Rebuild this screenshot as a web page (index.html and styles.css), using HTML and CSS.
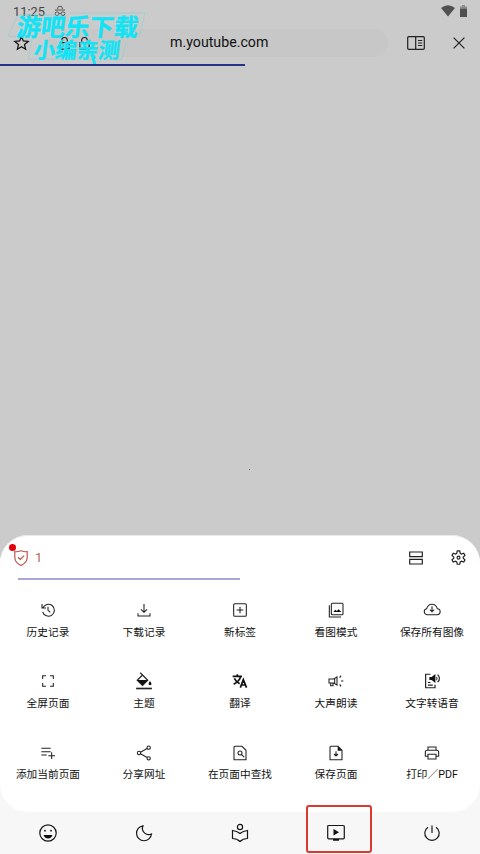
FILE: index.html
```html
<!DOCTYPE html>
<html lang="zh-CN">
<head>
<meta charset="utf-8">
<title>m.youtube.com</title>
<link rel="stylesheet" href="styles.css">
</head>
<body>
<div class="phone">
  <header class="status">
    <span class="time">11:25</span>
    <svg class="private" viewBox="0 0 12 12"><path d="M3.500 4 4.300 1.400h3.400L8.500 4M1 5h10M5 8.500h2"/><circle cx="3" cy="8.700" r="1.900"/><circle cx="9" cy="8.700" r="1.900"/></svg>
    <svg class="wifi" viewBox="0 0 14 12"><path d="M0 3Q7-2.500 14 3L7 11.500Z"/></svg>
    <svg class="battery" viewBox="0 0 7 12"><path class="cap" d="M2 0h3v1.500h2V3.500H0v-2h2Z"/><path d="M0 3.500h7V12H0Z"/></svg>
  </header>
  <div class="toolbar">
    <svg class="star" viewBox="0 0 24 24"><path d="m12 1.500 2.900 7.200 7.900.7-6 5.100 1.800 7.500-6.600-4-6.600 4 1.800-7.500-6-5.100 7.900-.7Z"/></svg>
    <div class="address">
      <svg class="lock" viewBox="0 0 14 14"><path d="M4 5V3.500a3 3 0 0 1 6 0V5M2 6h10v7H2Z"/></svg>
      <svg class="lock" viewBox="0 0 14 14"><path d="M4 5V3.500a3 3 0 0 1 6 0V5M2 6h10v7H2Z"/></svg>
      <span class="url">m.youtube.com</span>
    </div>
    <svg class="reader" viewBox="0 0 18 14"><rect x=".7" y=".7" width="16.600" height="12.600" rx="1"/><path d="M8.700 1v12M11 4.500h4.200M11 7h4.200M11 9.500h4.200"/></svg>
    <svg class="close" viewBox="0 0 12 12"><path d="m.6.600 10.800 10.800M11.400.6.600 11.400"/></svg>
  </div>
  <div class="progress"></div>
  <main class="page"><span class="speck"></span></main>
  <div class="lower">
    <section class="sheet">
      <div class="sheet-head">
        <svg class="shield" viewBox="0 0 16 18"><path d="M8 1.800Q11.500 3 14.200 2.700V8.500C14.200 12 11.500 14.800 8 16.500 4.500 14.800 1.800 12 1.800 8.500V2.700Q4.500 3 8 1.800ZM5 8.300l2.300 2.200 3.900-3.900"/></svg>
        <span class="count">1</span>
        <svg class="tabs" viewBox="0 0 14 14"><path d="M.7 1h12.600v4.700H.7ZM.7 8.300h12.600V13H.7Z"/></svg>
        <svg class="gear" viewBox="0 0 24 24"><path d="M10 1.500h4l.8 3.700 2 1.200 3.600-1.200 2 3.500-2.800 2.500v2l2.800 2.500-2 3.500-3.600-1.200-2 1.200-.8 3.600h-4l-.8-3.600-2-1.200-3.600 1.200-2-3.500 2.800-2.500v-2L1.600 8.700l2-3.500 3.600 1.200 2-1.200Z"/><circle cx="12" cy="12.200" r="2.300"/></svg>
        <span class="alert"></span>
      </div>
      <div class="rule"></div>
      <div class="actions">
        <div class="action"><svg viewBox="0 0 24 24"><path d="M4.200 9A9 9 0 1 1 4 15M3 3v6h6M12 7v5.500l3.500 3"/></svg><span>历史记录</span></div>
        <div class="action"><svg viewBox="0 0 24 24"><path d="M12 3v12M7.500 11l4.500 4.500 4.500-4.500M3 17v4h18v-4"/></svg><span>下载记录</span></div>
        <div class="action"><svg viewBox="0 0 24 24"><rect x="2.500" y="2.500" width="19" height="19" rx="1.500"/><path d="M12 7v10M7 12h10"/></svg><span>新标签</span></div>
        <div class="action"><svg viewBox="0 0 24 24"><rect x="5" y="2" width="17.500" height="17" rx="1.500"/><path d="M2 5v17.500h17.500"/><path class="solid" d="m8 15 3-3.500 2.200 2L16 11l4 4Z"/></svg><span>看图模式</span></div>
        <div class="action"><svg viewBox="0 0 24 24"><path d="M6 19H4.500a4.500 4.500 0 0 1-.5-8.900Q6 3.500 12 3.500T20 10a4.500 4.500 0 0 1-.5 9H18M12 6.500v8M8.800 11.500 12 14.700l3.200-3.200M6 19h12"/></svg><span>保存所有图像</span></div>

        <div class="action"><svg viewBox="0 0 24 24"><path d="M4 9V4h5M15 4h5v5M20 15v5h-5M9 20H4v-5"/></svg><span>全屏页面</span></div>
        <div class="action"><svg class="large" viewBox="0 0 24 24"><path d="m7 1 10 10-7 7-7-7 7-7"/><path class="solid" d="M3 10.500h14L10 17.500ZM20 12q4 5 0 5.500-4-.5 0-5.500Z"/><path class="heavy" d="M1.500 22h21"/></svg><span>主题</span></div>
        <div class="action"><svg viewBox="0 0 24 24"><path class="bold" d="M1 5h14M8 2v3M3.500 8c2 4 5 6.500 8 8M13 5c-1 5-5 9-10.500 12M12.500 22l4.500-12 4.800 12M14 18h6"/></svg><span>翻译</span></div>
        <div class="action"><svg viewBox="0 0 24 24"><path d="M1.500 9h7l5-3v12l-5-3h-7ZM4 15v4h3.500v-4M10 9v6M19.500 12H23M17.500 7l2-3M17.500 17l2 3"/></svg><span>大声朗读</span></div>
        <div class="action"><svg class="large" viewBox="0 0 24 24"><path d="M10 3H3.500v18H16v-4M6.500 14H10M6.500 17.500H13M19.500 3.500q5 5 0 10"/><path class="solid" d="M8.500 6.500h3L16.500 2.500v12l-5-4h-3ZM17.800 5.500q3 3 0 6Z"/></svg><span>文字转语音</span></div>

        <div class="action"><svg viewBox="0 0 24 24"><path d="M2 5h14M2 10h14M2 15h8M17.500 11v10M12.500 16h10"/></svg><span>添加当前页面</span></div>
        <div class="action"><svg viewBox="0 0 24 24"><circle cx="4.500" cy="12" r="2.500"/><circle cx="19" cy="4" r="2.500"/><circle cx="19" cy="20" r="2.500"/><path d="m6.700 10.800 10-5.600M6.700 13.200l10 5.600"/></svg><span>分享网址</span></div>
        <div class="action"><svg viewBox="0 0 24 24"><path d="M4.500 2H15l6 6v14H3V3.500Q3 2 4.500 2Z"/><circle cx="12" cy="12" r="3"/><path d="m14.300 14.300 4 4"/></svg><span>在页面中查找</span></div>
        <div class="action"><svg viewBox="0 0 24 24"><path d="M4.500 2H15l6 6v14H3V3.500Q3 2 4.500 2ZM12 9.500v7M9 13.500l3 3 3-3"/><path class="solid" d="M14.500 2 21 8.500h-6.500Z"/></svg><span>保存页面</span></div>
        <div class="action"><svg viewBox="0 0 24 24"><path d="M6 8V3h12v5M6 17H2v-6a3 3 0 0 1 3-3h14a3 3 0 0 1 3 3v6h-4M6 14h12v7H6Z"/></svg><span>打印／PDF</span></div>
      </div>
    </section>
    <nav class="nav">
      <div class="item"><svg viewBox="0 0 20 20"><circle cx="10" cy="10" r="8.200"/><path class="solid" d="M5.500 12h9q-1.300 3.500-4.500 3.500T5.500 12Z"/><circle class="solid" cx="7" cy="7.700" r=".9"/><circle class="solid" cx="13" cy="7.700" r=".9"/></svg></div>
      <div class="item"><svg viewBox="0 0 20 20"><path d="M9 2.800A7.500 7.500 0 1 0 17.500 11 6.300 6.300 0 0 1 9 2.800Z"/></svg></div>
      <div class="item"><svg viewBox="0 0 20 20"><circle cx="10" cy="4" r="2.600"/><path d="M2.500 7.500Q7 8 10 10.500 13 8 17.500 7.500v8Q13 15.500 10 18.500 7 15.500 2.500 15.500Z"/></svg></div>
      <div class="item"><svg viewBox="0 0 20 20"><rect x="1.700" y="2.500" width="16.600" height="13.300" rx="1"/><path class="solid" d="m7.500 6 5.500 3.300-5.500 3.300ZM7 16h6v1.800H7Z"/></svg><span class="highlight"></span></div>
      <div class="item"><svg viewBox="0 0 20 20"><path d="M10 2.500V10M6 4.200a7.200 7.200 0 1 0 8 0"/></svg></div>
    </nav>
  </div>
  <div class="stamp">
    <svg class="stamp-lines" viewBox="0 0 146 56"><path d="M10 3H54l3-2M62 1h75l-5 22-5 3M10 3 0 24l19 1M24 27 20 47h65M118 31l-4 16h-12"/></svg>
    <span class="stamp-top">游吧乐下载</span>
    <span class="stamp-bottom">小编亲测</span>
    <span class="stamp-tail"></span>
  </div>
</div>
</body>
</html>
```
FILE: styles.css
```css
* { box-sizing: border-box; }
body { margin: 0; font-family: Roboto, "Noto Sans CJK SC", sans-serif; color: #111; }
svg { display: block; flex: none; fill: none; stroke: #222; stroke-width: 1.2; overflow: visible; }
.phone { position: relative; display: flex; flex-direction: column; width: 480px; height: 854px; overflow: hidden; background: #cbcbcb; }

.status { display: flex; align-items: center; height: 22px; padding: 0 13px; }
.time { width: 32px; font-size: 12.8px; color: #444; white-space: nowrap; }
.private { width: 12px; height: 12px; margin-left: 9px; stroke: #555; stroke-width: 1; }
.wifi { width: 14px; height: 12px; margin-left: auto; }
.battery { width: 7px; height: 12px; margin-left: 5px; }
.wifi, .battery { fill: #505050; stroke: none; }
.cap { fill: #8c8c8c; }

.toolbar { display: flex; align-items: center; height: 42px; padding: 0 15px 0 14px; }
.star { width: 15px; height: 16px; stroke: #111; stroke-width: 2; }
.address { display: flex; align-items: center; gap: 7px; width: 340px; height: 28px; margin-left: 19px; padding-left: 10px; border-radius: 14px; background: #c7c7c7; }
.lock { width: 13px; height: 13px; }
.url { margin: 0 0 2px 72px; font-size: 14.2px; line-height: 20px; }
.reader { width: 18px; height: 14px; margin-left: 19px; }
.close { width: 12px; height: 12px; margin-left: auto; }
.progress { width: 245px; height: 2px; background: #283286; }
.page { flex: 1; display: flex; align-items: flex-start; justify-content: center; }
.speck { width: 1px; height: 1px; margin: 403px 0 0 19px; background: #777; }

.lower { height: 319px; border-radius: 28px 28px 0 0; background: #f7f7f7; }
.sheet { height: 277px; padding-top: 8px; border-top: 1px solid #e9e9e9; border-radius: 28px; background: #fff; }
.sheet-head { position: relative; display: flex; align-items: center; height: 27px; padding: 0 14px 0 13px; }
.shield { width: 16px; height: 18px; stroke: #b85748; }
.count { margin-left: 6px; font-size: 13px; color: #b66558; }
.tabs { width: 14px; height: 14px; margin-left: auto; }
.gear { width: 15px; height: 15px; margin-left: 28px; stroke-width: 1.9; }
.alert { position: absolute; left: 9px; top: 0; width: 7px; height: 7px; border-radius: 50%; background: #e3000b; }
.rule { width: 222px; height: 2px; margin: 7px 0 0 18px; background: #aaa7d7; }
.actions { display: grid; grid-template-columns: repeat(5, 96px); grid-auto-rows: 71.3px; margin-top: 20px; }
.action { display: flex; flex-direction: column; align-items: center; font-size: 10.7px; line-height: 16px; color: #111; white-space: nowrap; }
.action svg { width: 16px; height: 16px; margin: 2px 0 6.500px; stroke-width: 1.6; }
.action svg.large { width: 18px; height: 18px; margin: 1px 0 5.500px; }
.solid { fill: #111; stroke: none; }
.heavy { stroke-width: 2.200; }
.bold { stroke: #111; stroke-width: 2.500; }

.nav { display: grid; grid-template-columns: repeat(5, 96px); height: 42px; }
.item { position: relative; display: flex; align-items: center; justify-content: center; padding-bottom: 1px; }
.item svg { width: 20px; height: 20px; stroke: #161616; }
.highlight { position: absolute; left: 18px; top: -7px; width: 66px; height: 48px; border: 2px solid #d83a30; border-radius: 3px; }

.stamp { position: absolute; left: 8px; top: 12px; width: 146px; height: 56px; color: #12e3f5; font-family: "Noto Sans CJK SC", sans-serif; font-weight: 700; white-space: nowrap; }
.stamp-lines { position: absolute; width: 146px; height: 56px; stroke: #86cfd5; stroke-width: .6; }
.stamp-top, .stamp-bottom { position: absolute; transform: skewX(-7deg); -webkit-text-stroke: .4px #12e3f5; }
.stamp-top { left: 9px; top: 1px; font-size: 24.300px; line-height: 25px; }
.stamp-bottom { left: 26px; top: 26px; font-size: 21.500px; line-height: 22px; }
.stamp-tail { position: absolute; left: 84px; top: 43px; width: 3px; height: 9px; background: #12e3f5; transform: skewX(15deg); }
```
